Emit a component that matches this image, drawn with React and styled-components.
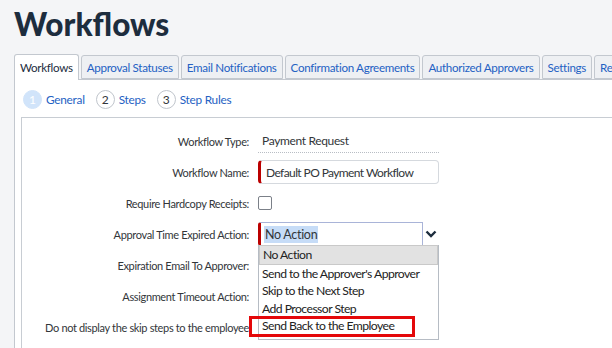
import styled, { createGlobalStyle } from "styled-components";

const GlobalStyle = createGlobalStyle`
  html, body {
    margin: 0;
    padding: 0;
    background: #f4f5f7;
    overflow: hidden;
  }
  body {
    font-family: Lato, "Liberation Sans", sans-serif;
  }
`;

const tabs = [
  "Workflows",
  "Approval Statuses",
  "Email Notifications",
  "Confirmation Agreements",
  "Authorized Approvers",
  "Settings",
  "Re",
];

const steps = ["General", "Steps", "Step Rules"];

const options = [
  "No Action",
  "Send to the Approver's Approver",
  "Skip to the Next Step",
  "Add Processor Step",
  "Send Back to the Employee",
];

export default function App() {
  return (
    <>
      <GlobalStyle />
      <Page>
        <Title>Workflows</Title>
        <TabBar>
          {tabs.map((t, i) => (
            <Tab key={t} $active={i === 0}>
              {t}
            </Tab>
          ))}
        </TabBar>
        <Panel>
          <StepsRow>
            {steps.map((s, i) => (
              <Step key={s}>
                <StepNum $active={i === 0}>{i + 1}</StepNum>
                <StepLabel>{s}</StepLabel>
              </Step>
            ))}
          </StepsRow>
          <FormBox>
            <FormGrid>
              <Label>Workflow Type:</Label>
              <ReadOnly>Payment Request</ReadOnly>

              <Label>Workflow Name:</Label>
              <TextInput>Default PO Payment Workflow</TextInput>

              <Label>Require Hardcopy Receipts:</Label>
              <div>
                <Checkbox />
              </div>

              <Label>Approval Time Expired Action:</Label>
              <SelectWrap>
                <Select>
                  <Selected>No Action</Selected>
                </Select>
                <Chevron viewBox="0 0 12 8">
                  <path d="M1.5 1.5 L6 6 L10.5 1.5" />
                </Chevron>
                <DropList>
                  {options.map((o, i) => (
                    <Option key={o} $selected={i === 0}>
                      {o}
                    </Option>
                  ))}
                  <Highlight />
                </DropList>
              </SelectWrap>

              <Label>Expiration Email To Approver:</Label>
              <div />

              <Label>Assignment Timeout Action:</Label>
              <div />

              <Label>Do not display the skip steps to the employee</Label>
              <div />
            </FormGrid>
          </FormBox>
        </Panel>
      </Page>
    </>
  );
}

const Page = styled.div`
  height: 348px;
  padding: 0 0 0 14px;
  box-sizing: border-box;
  overflow: hidden;
`;

const Title = styled.h1`
  margin: 0;
  padding: 3px 0 0 0;
  height: 52px;
  box-sizing: border-box;
  font-family: Lato, "Open Sans", sans-serif;
  font-weight: 900;
  font-size: 31.5px;
  color: #1d2d3e;
  line-height: 42px;
`;

const TabBar = styled.div`
  display: flex;
  gap: 2px;
  height: 27px;
  align-items: flex-end;
  white-space: nowrap;
  position: relative;
  z-index: 1;
`;

const Tab = styled.div`
  flex: none;
  height: ${({ $active }) => ($active ? "26px" : "24px")};
  margin-bottom: ${({ $active }) => ($active ? "-1px" : "0")};
  box-sizing: border-box;
  padding: 0 5px;
  display: flex;
  align-items: center;
  border: 1px solid #c3c8cf;
  border-bottom: ${({ $active }) => ($active ? "none" : "1px solid #c3c8cf")};
  border-radius: 3px 3px 0 0;
  background: ${({ $active }) => ($active ? "#ffffff" : "#eef0f3")};
  color: ${({ $active }) => ($active ? "#1d2d3e" : "#2461c3")};
  font-size: 11.6px;
  letter-spacing: -0.3px;
`;

const Panel = styled.div`
  background: #ffffff;
  border-left: 1px solid #c3c8cf;
  border-top: 1px solid #c3c8cf;
  height: 300px;
  padding: 0 0 0 6px;
`;

const StepsRow = styled.div`
  display: flex;
  gap: 11px;
  padding: 10px 0 0 2px;
  height: 37px;
  box-sizing: border-box;
`;

const Step = styled.div`
  display: flex;
  align-items: center;
  gap: 4px;
  height: 19px;
`;

const StepNum = styled.div`
  width: 19px;
  height: 19px;
  box-sizing: border-box;
  border-radius: 50%;
  display: flex;
  align-items: center;
  justify-content: center;
  font-size: 12px;
  color: ${({ $active }) => ($active ? "#ffffff" : "#32363a")};
  background: ${({ $active }) => ($active ? "#d1e4fa" : "#ffffff")};
  border: 1px solid ${({ $active }) => ($active ? "#d1e4fa" : "#c0c5cc")};
`;

const StepLabel = styled.span`
  font-size: 11.8px;
  letter-spacing: -0.25px;
  color: #2461c3;
`;

const FormBox = styled.div`
  border: 1px solid #c8cdd3;
  border-right: none;
  height: 260px;
  padding: 11px 0 0 0;
  box-sizing: border-box;
`;

const FormGrid = styled.div`
  display: grid;
  grid-template-columns: 227px 1fr;
  grid-template-rows: repeat(7, 24px);
  row-gap: 7px;
  column-gap: 9px;
  align-items: center;
`;

const Label = styled.div`
  text-align: right;
  font-size: 11px;
  letter-spacing: -0.35px;
  color: #32363a;
  white-space: nowrap;
`;

const ReadOnly = styled.div`
  width: 181px;
  height: 24px;
  box-sizing: border-box;
  padding: 0 4px;
  display: flex;
  align-items: center;
  font-size: 12px;
  letter-spacing: -0.35px;
  color: #32363a;
  border-bottom: 1px dotted #b8bdc4;
`;

const TextInput = styled.div`
  width: 181px;
  height: 24px;
  box-sizing: border-box;
  padding: 0 5px;
  display: flex;
  align-items: center;
  white-space: nowrap;
  font-size: 12px;
  letter-spacing: -0.6px;
  color: #32363a;
  border: 1px solid #d5d9de;
  border-left: 3px solid #b00;
  border-radius: 4px;
`;

const Checkbox = styled.div`
  width: 12px;
  height: 12px;
  border: 1px solid #7b8088;
  border-radius: 2px;
  background: #fff;
`;

const SelectWrap = styled.div`
  position: relative;
  height: 24px;
  display: flex;
  align-items: center;
`;

const Select = styled.div`
  width: 165px;
  height: 24px;
  box-sizing: border-box;
  padding: 0 3px;
  display: flex;
  align-items: center;
  border: 1px solid #a9b4d8;
  border-left: 3px solid #b00;
  border-radius: 3px 0 0 3px;
  background: #fff;
`;

const Selected = styled.span`
  background: #c6dcf7;
  font-size: 12.5px;
  letter-spacing: -0.3px;
  color: #32363a;
  padding: 1px 1px;
`;

const Chevron = styled.svg`
  width: 12px;
  height: 8px;
  margin-left: 2px;
  fill: none;
  stroke: #1d2d3e;
  stroke-width: 2.4;
`;

const DropList = styled.div`
  position: absolute;
  left: 0;
  top: 23px;
  width: 181px;
  box-sizing: border-box;
  border: 1px solid #b6bcc4;
  border-top: none;
  background: #fff;
  padding: 0 0 4px 0;
`;

const Option = styled.div`
  height: 17.5px;
  line-height: 17.5px;
  padding: 0 3px;
  font-family: Lato, "Liberation Sans", sans-serif;
  font-size: 12.2px;
  letter-spacing: -0.55px;
  color: #222;
  white-space: nowrap;
  background: ${({ $selected }) => ($selected ? "#e2e2e2" : "transparent")};
  border: ${({ $selected }) => ($selected ? "1px solid #c9c9c9" : "none")};
`;

const Highlight = styled.div`
  position: absolute;
  left: -10px;
  bottom: 2px;
  width: 166px;
  height: 21px;
  box-sizing: border-box;
  border: 3px solid #e4080a;
`;
